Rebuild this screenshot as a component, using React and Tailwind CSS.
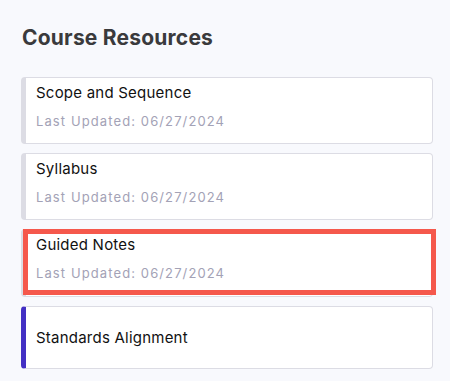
import { Fragment } from 'react';

const resources = [
  { title: 'Scope and Sequence', updated: '06/27/2024' },
  { title: 'Syllabus', updated: '06/27/2024' },
  { title: 'Guided Notes', updated: '06/27/2024', highlighted: true },
  { title: 'Standards Alignment', active: true },
];

function ResourceCard({ item }) {
  const height = item.active ? 'h-[63px]' : item.highlighted ? 'h-[68px]' : 'h-[67px]';
  return (
    <div
      className={`relative flex flex-col rounded-[4px] border border-[#dcdce4] bg-white border-l-[5px] ${height} ${
        item.active ? 'border-l-[#4330c4] justify-center' : 'border-l-[#dcdce4] pt-[5px]'
      } pl-[10px]`}
    >
      {item.updated ? (
        <div className="flex flex-col">
          <span className="text-[15px] leading-[20px] tracking-[0.015em] text-[#111]">{item.title}</span>
          <span className="mt-[9px] text-[13px] leading-[18px] tracking-[0.085em] text-[#a3a2b6]">
            Last Updated: {item.updated}
          </span>
        </div>
      ) : (
        <span className="text-[15px] leading-[20px] tracking-[0.015em] text-[#111]">{item.title}</span>
      )}
      {item.highlighted && (
        <div className="pointer-events-none absolute -top-[1px] left-[-3px] right-[-4px] bottom-[1px] border-[5px] border-[#f5584c]" />
      )}
    </div>
  );
}

export default function App() {
  return (
    <div
      className="min-h-screen bg-[#f8f9fd] px-[21px] pt-[23px] pb-[12px]"
      style={{ fontFamily: 'Inter, "Noto Sans", sans-serif' }}
    >
      <h1 className="text-[21px] font-bold leading-[30px] tracking-[0.01em] text-[#3a3a3c] pl-[1px]">
        Course Resources
      </h1>
      <div className="mt-[24px] w-[412px] flex flex-col gap-[9px]">
        {resources.map((r) => (
          <Fragment key={r.title}>
            <ResourceCard item={r} />
          </Fragment>
        ))}
      </div>
    </div>
  );
}
